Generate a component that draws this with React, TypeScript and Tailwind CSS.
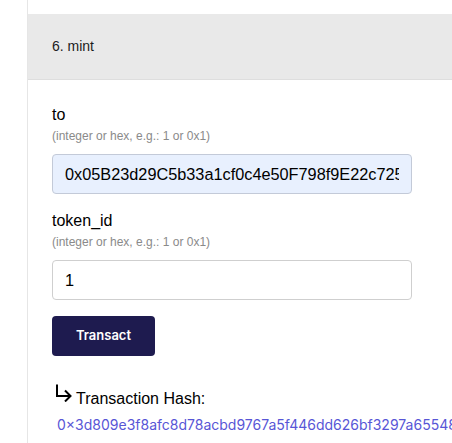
import React from 'react';

const sans = { fontFamily: '"Liberation Sans", Arial, sans-serif' };

export default function App() {
  const fields = [
    { name: 'to', value: '0x05B23d29C5b33a1cf0c4e50F798f9E22c7251b3e', filled: true },
    { name: 'token_id', value: '1', filled: false },
  ];

  return (
    <div className="flex h-[443px] w-[452px] overflow-hidden bg-white pl-[27px] text-black" style={sans}>
      <div className="min-w-0 flex-1 border-l border-[#e6e6e6] pt-[14px]">
        {/* header */}
        <div className="box-border flex h-[66px] items-center border-b border-[#dedede] bg-[#e9e9e9] pl-6 text-[14px] text-[#1c1c1c]">
          6. mint
        </div>

        <div className="flex flex-col items-start px-6 pt-[26px]">
          {fields.map((f, i) => (
            <div key={f.name} className={i === 0 ? 'flex flex-col' : 'mt-[18px] flex flex-col'}>
              <label className="text-[16px] leading-[17px]">{f.name}</label>
              <p className="mt-[7px] text-[12px] leading-[12px] text-[#8a8a8a]">(integer or hex, e.g.: 1 or 0x1)</p>
              <input
                readOnly
                value={f.value}
                className={
                  f.filled
                    ? 'mt-3 box-border h-[40px] w-[360px] rounded-[4px] border border-[#c3cad8] bg-[#e8f0fe] px-3 text-[16.3px] outline-none'
                    : 'mt-3 box-border h-[40px] w-[360px] rounded-[4px] border border-[#cfcfcf] bg-white px-3 text-[16.3px] outline-none'
                }
                style={sans}
              />
            </div>
          ))}

          <button
            className="mt-4 h-[40px] w-[103px] rounded-[4px] bg-[#1e1b4f] text-[13px] font-semibold text-white"
            style={{ fontFamily: 'Inter, sans-serif' }}
          >
            Transact
          </button>

          {/* result */}
          <div className="mt-[28px] flex items-start">
            <svg width="17" height="18" viewBox="0 0 17 18" className="ml-[3px]" fill="none" stroke="#000" strokeWidth="2">
              <path d="M2 0.5V12H15.5" />
              <path d="M10 6.5L15.5 12L10 17.5" />
            </svg>
            <span className="ml-1 mt-[5px] text-[16px] leading-[20px]">Transaction Hash:</span>
          </div>
          <a
            className="ml-[5px] mt-[6px] whitespace-nowrap text-[14px] leading-[20px] text-[#5856d6]"
            style={{ fontFamily: 'Inter, sans-serif' }}
          >
            0×3d809e3f8afc8d78acbd9767a5f446dd626bf3297a65548e1c0d2a9b7f34e6c
          </a>
        </div>
      </div>
    </div>
  );
}
